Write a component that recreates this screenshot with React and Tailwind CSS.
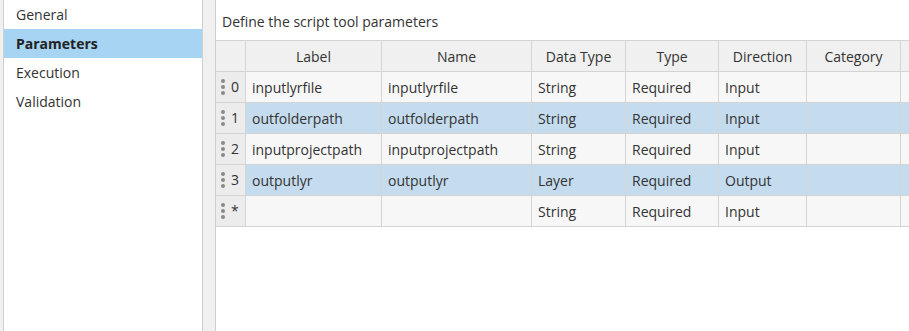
import React from "react";

const cols = [
  { label: "Label", w: "w-[136px]" },
  { label: "Name", w: "w-[150px]" },
  { label: "Data Type", w: "w-[94px]" },
  { label: "Type", w: "w-[93px]" },
  { label: "Direction", w: "w-[88px]" },
  { label: "Category", w: "w-[94px]" },
];

const rows = [
  { idx: "0", vals: ["inputlyrfile", "inputlyrfile", "String", "Required", "Input", ""], sel: false },
  { idx: "1", vals: ["outfolderpath", "outfolderpath", "String", "Required", "Input", ""], sel: true },
  { idx: "2", vals: ["inputprojectpath", "inputprojectpath", "String", "Required", "Input", ""], sel: false },
  { idx: "3", vals: ["outputlyr", "outputlyr", "Layer", "Required", "Output", ""], sel: true },
  { idx: "*", vals: ["", "", "String", "Required", "Input", ""], sel: false },
];

function Dots() {
  return (
    <div className="flex flex-col gap-[2px] items-center">
      <span className="w-[4px] h-[4px] rounded-full bg-[#8a8a8a]" />
      <span className="w-[4px] h-[4px] rounded-full bg-[#8a8a8a]" />
      <span className="w-[4px] h-[4px] rounded-full bg-[#8a8a8a]" />
    </div>
  );
}

export default function App() {
  return (
    <div
      className="w-[909px] h-[331px] bg-[#f0f0f0] flex overflow-hidden text-[#333333]"
      style={{ fontFamily: '"Open Sans", "Noto Sans", sans-serif' }}
    >
      <div className="ml-[3px] w-[200px] h-full bg-white border-l border-r border-[#cfcfcf] flex flex-col">
        <div className="h-[29px] flex items-center pl-[12px] text-[14px]">General</div>
        <div className="h-[29px] flex items-center pl-[12px] text-[14px] font-bold bg-[#a6d4f2] text-[#222]">Parameters</div>
        <div className="h-[29px] flex items-center pl-[12px] text-[14px]">Execution</div>
        <div className="h-[29px] flex items-center pl-[12px] text-[14px]">Validation</div>
      </div>
      <div className="ml-[12px] flex-1 h-full bg-white border-l border-[#cfcfcf] flex flex-col">
        <div className="h-[40px] flex items-center pl-[6px] text-[14px] pt-[2px]">Define the script tool parameters</div>
        <div className="flex flex-col border-t border-[#d4d4d4]">
          <div className="flex h-[31px] bg-[#f0f0f0] border-b border-[#d4d4d4]">
            <div className="w-[30px] shrink-0 border-r border-[#d4d4d4]" />
            {cols.map((c) => (
              <div key={c.label} className={`${c.w} shrink-0 border-r border-[#d4d4d4] flex items-center justify-center text-[14px]`}>
                {c.label}
              </div>
            ))}
            <div className="flex-1" />
          </div>
          {rows.map((r) => (
            <div key={r.idx} className={`flex h-[31px] border-b border-[#d4d4d4] ${r.sel ? "bg-[#c5dcef]" : "bg-[#f7f7f7]"}`}>
              <div className="w-[30px] shrink-0 border-r border-[#d4d4d4] bg-[#ececec] flex items-center pl-[5px] gap-[6px] text-[14px]">
                <Dots />
                <span className="leading-none">{r.idx}</span>
              </div>
              {r.vals.map((v, i) => (
                <div key={i} className={`${cols[i].w} shrink-0 border-r border-[#d4d4d4] flex items-center pl-[6px] text-[14px] whitespace-nowrap`}>
                  {v}
                </div>
              ))}
              <div className="flex-1" />
            </div>
          ))}
        </div>
      </div>
    </div>
  );
}
